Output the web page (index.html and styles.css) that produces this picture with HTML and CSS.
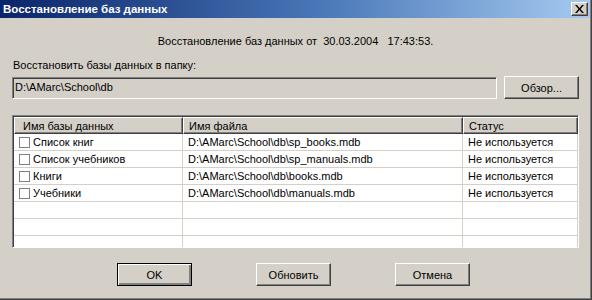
FILE: index.html
```html
<!DOCTYPE html>
<html lang="ru">
<head>
  <meta charset="UTF-8">
  <link rel="stylesheet" href="styles.css">
</head>
<body>
  <div class="window">
    <div class="titlebar">
      <span class="title">Восстановление баз данных</span>
      <span class="close-btn">
        <svg width="9" height="8" viewBox="0 0 9 8"><path d="M0 0h2l2.5 3 2.5-3h2l-3.5 4 3.5 4h-2l-2.5-3-2.5 3h-2l3.5-4z" fill="#000"/></svg>
      </span>
    </div>

    <div class="content">
      <div class="date-line">Восстановление баз данных от  30.03.2004   17:43:53.</div>

      <div class="folder-label">Восстановить базы данных в папку:</div>
      <div class="folder-row">
        <div class="textbox">D:\AMarc\School\db</div>
        <button class="btn">Обзор...</button>
      </div>

      <div class="list">
        <div class="list-head">
          <div class="head-cell">Имя базы данных</div>
          <div class="head-cell">Имя файла</div>
          <div class="head-cell">Статус</div>
        </div>
        <div class="list-row">
          <div class="cell"><span class="check"></span>Список книг</div>
          <div class="cell">D:\AMarc\School\db\sp_books.mdb</div>
          <div class="cell">Не используется</div>
        </div>
        <div class="list-row">
          <div class="cell"><span class="check"></span>Список учебников</div>
          <div class="cell">D:\AMarc\School\db\sp_manuals.mdb</div>
          <div class="cell">Не используется</div>
        </div>
        <div class="list-row">
          <div class="cell"><span class="check"></span>Книги</div>
          <div class="cell">D:\AMarc\School\db\books.mdb</div>
          <div class="cell">Не используется</div>
        </div>
        <div class="list-row">
          <div class="cell"><span class="check"></span>Учебники</div>
          <div class="cell">D:\AMarc\School\db\manuals.mdb</div>
          <div class="cell">Не используется</div>
        </div>
        <div class="list-row">
          <div class="cell"></div><div class="cell"></div><div class="cell"></div>
        </div>
        <div class="list-row">
          <div class="cell"></div><div class="cell"></div><div class="cell"></div>
        </div>
        <div class="list-row">
          <div class="cell"></div><div class="cell"></div><div class="cell"></div>
        </div>
      </div>

      <div class="actions">
        <button class="btn btn-default">OK</button>
        <button class="btn">Обновить</button>
        <button class="btn">Отмена</button>
      </div>
    </div>
  </div>
</body>
</html>
```

FILE: styles.css
```css
body {
  margin: 0;
  font-family: 'Liberation Sans', Arial, sans-serif;
  font-size: 11px;
  color: #000;
  background: #d4d0c8;
}

.window {
  box-sizing: border-box;
  width: 592px;
  height: 300px;
  background: #d4d0c8;
  border-right: 1px solid #404040;
  border-bottom: 1px solid #404040;
  box-shadow: inset -1px -1px 0 #808080;
  overflow: hidden;
}

.titlebar {
  height: 18px;
  margin-right: 1px;
  display: flex;
  align-items: center;
  justify-content: space-between;
  padding: 0 2px 0 3px;
  background: linear-gradient(to right, #0a246a, #4a78b8 55%, #a6caf0);
}

.title {
  color: #fff;
  font-weight: bold;
  font-size: 11.5px;
}

.close-btn {
  box-sizing: border-box;
  width: 17px;
  height: 14px;
  display: flex;
  align-items: center;
  justify-content: center;
  background: #d4d0c8;
  border-top: 1px solid #fff;
  border-left: 1px solid #fff;
  border-right: 1px solid #404040;
  border-bottom: 1px solid #404040;
  box-shadow: inset -1px -1px 0 #808080;
}

.content {
  padding: 0 12px;
}

.date-line {
  white-space: pre;
  text-align: center;
  padding-top: 17px;
  line-height: 13px;
}

.folder-label {
  margin-top: 11px;
  padding-left: 1px;
  line-height: 13px;
}

.folder-row {
  display: flex;
  align-items: flex-start;
  gap: 7px;
  margin-top: 4px;
}

.textbox {
  box-sizing: border-box;
  width: 486px;
  height: 22px;
  margin-top: 1px;
  padding: 3px 0 0 2px;
  background: #d4d0c8;
  border-top: 1px solid #808080;
  border-left: 1px solid #808080;
  border-right: 1px solid #fff;
  border-bottom: 1px solid #fff;
  box-shadow: inset 1px 1px 0 #404040;
}

.btn {
  box-sizing: border-box;
  width: 75px;
  height: 23px;
  padding: 0;
  font-family: inherit;
  font-size: 11px;
  color: #000;
  background: #d4d0c8;
  border-top: 1px solid #fff;
  border-left: 1px solid #fff;
  border-right: 1px solid #404040;
  border-bottom: 1px solid #404040;
  box-shadow: inset -1px -1px 0 #808080;
}

.btn-default {
  border: 1px solid #000;
  box-shadow: inset 1px 1px 0 #fff, inset -2px -2px 0 #808080;
}

.list {
  box-sizing: border-box;
  width: 567px;
  height: 133px;
  margin-top: 16px;
  background: #fff;
  border-top: 1px solid #808080;
  border-left: 1px solid #808080;
  border-right: 1px solid #fff;
  border-bottom: 1px solid #fff;
  box-shadow: inset 1px 1px 0 #404040;
  padding: 1px 0 0 1px;
  overflow: hidden;
}

.list-head,
.list-row {
  display: grid;
  grid-template-columns: 169px 280px 1fr;
}

.head-cell {
  box-sizing: border-box;
  height: 17px;
  padding: 2px 0 0 8px;
  line-height: 13px;
  background: #d4d0c8;
  border-top: 1px solid #fff;
  border-left: 1px solid #fff;
  border-right: 1px solid #404040;
  border-bottom: 1px solid #404040;
  box-shadow: inset -1px -1px 0 #808080;
}

.head-cell + .head-cell {
  padding-left: 5px;
}

.list-row .cell {
  box-sizing: border-box;
  height: 17px;
  display: flex;
  align-items: center;
  padding-left: 5px;
  border-right: 1px solid #d4d0c8;
  border-bottom: 1px solid #d4d0c8;
  white-space: nowrap;
}

.check {
  box-sizing: border-box;
  width: 11px;
  height: 11px;
  margin-right: 3px;
  background: #fff;
  border: 1px solid #808080;
}

.actions {
  display: flex;
  gap: 64px;
  margin-top: 15px;
  padding-left: 105px;
}
```
